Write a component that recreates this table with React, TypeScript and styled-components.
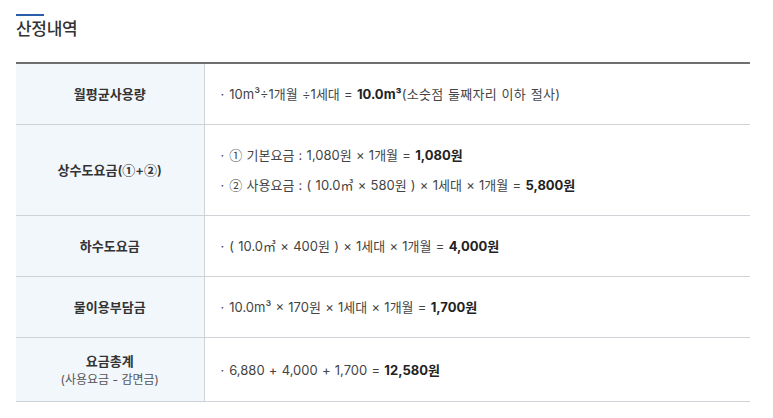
import React from 'react';
import styled, { createGlobalStyle } from 'styled-components';

const GlobalStyle = createGlobalStyle`
  body {
    margin: 0;
    background: #fff;
    font-family: Inter, "Noto Sans CJK KR", sans-serif;
  }
`;

const Page = styled.div`
  padding: 14px 23px 0 16px;
`;

const Title = styled.h3`
  margin: 0;
  position: relative;
  padding-top: 3px;
  font-size: 17px;
  line-height: 24px;
  font-weight: 500;
  color: #333;
  letter-spacing: -0.3px;

  &::before {
    content: '';
    display: block;
    width: 28px;
    height: 2px;
    background: #2a5ea8;
    position: absolute;
    top: 0;
    left: 0;
  }
`;

const Table = styled.table`
  width: 734px;
  margin-top: 21px;
  border-collapse: collapse;
  border-top: 2px solid #6f6f6f;
  font-size: 13px;
`;

const Row = styled.tr`
  border-bottom: 1px solid #cfd3d8;
`;

const Head = styled.th<{ $pad?: number }>`
  width: 188px;
  box-sizing: border-box;
  padding: ${({ $pad }) => $pad ?? 20}px 10px;
  background: #f2f7fc;
  border-right: 1px solid #cfd3d8;
  font-weight: 600;
  color: #333;
  line-height: 20px;
  text-align: center;
`;

const Sub = styled.span`
  display: block;
  font-size: 12px;
  font-weight: 400;
  color: #555;
  line-height: 17px;
`;

const Cell = styled.td`
  padding: 20px 16px;
  color: #444;
  line-height: 20px;
  text-align: left;
  word-spacing: 0.6px;
`;

const Line = styled.p`
  margin: 0;
  & + & {
    margin-top: 10px;
  }
`;

const Dot = styled.span`
  margin-right: 5px;
`;

const Hangul = styled.span`
  letter-spacing: 0.3px;
`;

const Circled = styled.span`
  font-family: "Noto Sans CJK KR", sans-serif;
`;

const Strong = styled.b`
  font-weight: 700;
  color: #222;
`;

export default function App() {
  return (
    <Page>
      <GlobalStyle />
      <Title>산정내역</Title>
      <Table>
        <tbody>
          <Row>
            <Head>월평균사용량</Head>
            <Cell>
              <Line>
                <Dot>·</Dot>10m³÷1개월 ÷1세대 = <Strong>10.0m³</Strong>
                <Hangul>(소숫점 둘째자리 이하 절사)</Hangul>
              </Line>
            </Cell>
          </Row>
          <Row>
            <Head>
              상수도요금(<Circled>①</Circled>+<Circled>②</Circled>)
            </Head>
            <Cell>
              <Line>
                <Dot>·</Dot><Circled>①</Circled> 기본요금 : 1,080원 × 1개월 = <Strong>1,080원</Strong>
              </Line>
              <Line>
                <Dot>·</Dot><Circled>②</Circled> 사용요금 : ( 10.0㎥ × 580원 ) × 1세대 × 1개월 ={' '}
                <Strong>5,800원</Strong>
              </Line>
            </Cell>
          </Row>
          <Row>
            <Head>하수도요금</Head>
            <Cell>
              <Line>
                <Dot>·</Dot>( 10.0㎥ × 400원 ) × 1세대 × 1개월 = <Strong>4,000원</Strong>
              </Line>
            </Cell>
          </Row>
          <Row>
            <Head>물이용부담금</Head>
            <Cell>
              <Line>
                <Dot>·</Dot>10.0m³ × 170원 × 1세대 × 1개월 = <Strong>1,700원</Strong>
              </Line>
            </Cell>
          </Row>
          <Row>
            <Head $pad={13}>
              요금총계
              <Sub>(사용요금 - 감면금)</Sub>
            </Head>
            <Cell>
              <Line>
                <Dot>·</Dot>6,880 + 4,000 + 1,700 = <Strong>12,580원</Strong>
              </Line>
            </Cell>
          </Row>
        </tbody>
      </Table>
    </Page>
  );
}
